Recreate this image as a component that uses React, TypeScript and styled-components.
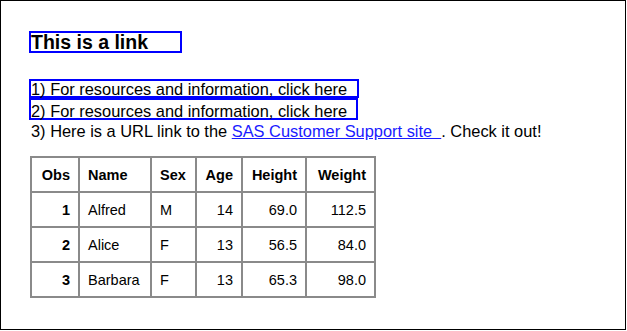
import React from "react";
import styled, { createGlobalStyle } from "styled-components";

const GlobalStyle = createGlobalStyle`
  html, body {
    margin: 0;
    padding: 0;
    background: #fff;
  }
  body {
    font-family: "Liberation Sans", Arial, sans-serif;
    color: #000;
  }
`;

interface Row {
  obs: number;
  name: string;
  sex: string;
  age: number;
  height: string;
  weight: string;
}

const rows: Row[] = [
  { obs: 1, name: "Alfred", sex: "M", age: 14, height: "69.0", weight: "112.5" },
  { obs: 2, name: "Alice", sex: "F", age: 13, height: "56.5", weight: "84.0" },
  { obs: 3, name: "Barbara", sex: "F", age: 13, height: "65.3", weight: "98.0" },
];

const columns = [
  { label: "Obs", width: 48, align: "right" },
  { label: "Name", width: 72, align: "left" },
  { label: "Sex", width: 45, align: "left" },
  { label: "Age", width: 46, align: "right" },
  { label: "Height", width: 64, align: "right" },
  { label: "Weight", width: 69, align: "right" },
];

const App: React.FC = () => {
  return (
    <>
      <GlobalStyle />
      <Frame>
        <Heading>This is a link</Heading>
        <LinkBox $width={330} $padTop={0} $height={19}>
          1) For resources and information, click here
        </LinkBox>
        <LinkBox $width={329} $padTop={3} $height={22}>
          2) For resources and information, click here
        </LinkBox>
        <Line>
          3) Here is a URL link to the <Anchor href="#">{"SAS Customer Support site  "}</Anchor>. Check it out!
        </Line>
        <Table>
          <thead>
            <tr>
              {columns.map((c) => (
                <Th key={c.label} $width={c.width} $align={c.align}>
                  {c.label}
                </Th>
              ))}
            </tr>
          </thead>
          <tbody>
            {rows.map((r) => (
              <tr key={r.obs}>
                <Td $align="right" $bold>
                  {r.obs}
                </Td>
                <Td $align="left">{r.name}</Td>
                <Td $align="left">{r.sex}</Td>
                <Td $align="right">{r.age}</Td>
                <Td $align="right">{r.height}</Td>
                <Td $align="right">{r.weight}</Td>
              </tr>
            ))}
          </tbody>
        </Table>
      </Frame>
    </>
  );
};

const Frame = styled.div`
  width: 626px;
  height: 330px;
  box-sizing: border-box;
  border: 1px solid #000;
  padding: 30px 0 0 28px;
  overflow: hidden;
`;

const Heading = styled.div`
  width: 153px;
  height: 22px;
  box-sizing: border-box;
  border: 2px solid #0000ff;
  font-size: 19.5px;
  font-weight: 700;
  line-height: 18px;
  white-space: nowrap;
  margin-bottom: 26px;
`;

const LinkBox = styled.div<{ $width: number; $padTop: number; $height: number }>`
  width: ${(p) => p.$width}px;
  height: ${(p) => p.$height}px;
  box-sizing: border-box;
  border: 2px solid #0000ff;
  padding-top: ${(p) => p.$padTop}px;
  font-size: 16.4px;
  line-height: 17px;
  white-space: nowrap;
  overflow: visible;
`;

const Line = styled.div`
  margin-top: 2px;
  padding-left: 2px;
  font-size: 16.4px;
  line-height: 19px;
  white-space: nowrap;
`;

const Anchor = styled.a`
  color: #1a1aff;
  text-decoration: underline;
  white-space: pre;
`;

const Table = styled.table`
  margin-top: 15px;
  margin-left: 1px;
  border-collapse: separate;
  border-spacing: 0;
  table-layout: fixed;
  border-top: 2px solid #8a8a8a;
  border-left: 2px solid #8a8a8a;
  font-size: 14.5px;
`;

const Th = styled.th<{ $width: number; $align: string }>`
  width: ${(p) => p.$width}px;
  height: 35px;
  box-sizing: border-box;
  padding: 0 8px;
  border-right: 2px solid #8a8a8a;
  border-bottom: 2px solid #8a8a8a;
  text-align: ${(p) => p.$align};
  font-weight: 700;
  vertical-align: middle;
  white-space: nowrap;
`;

const Td = styled.td<{ $align: string; $bold?: boolean }>`
  height: 35px;
  box-sizing: border-box;
  padding: 0 8px;
  border-right: 2px solid #8a8a8a;
  border-bottom: 2px solid #8a8a8a;
  text-align: ${(p) => p.$align};
  font-weight: ${(p) => (p.$bold ? 700 : 400)};
  vertical-align: middle;
  white-space: nowrap;
`;

export default App;
